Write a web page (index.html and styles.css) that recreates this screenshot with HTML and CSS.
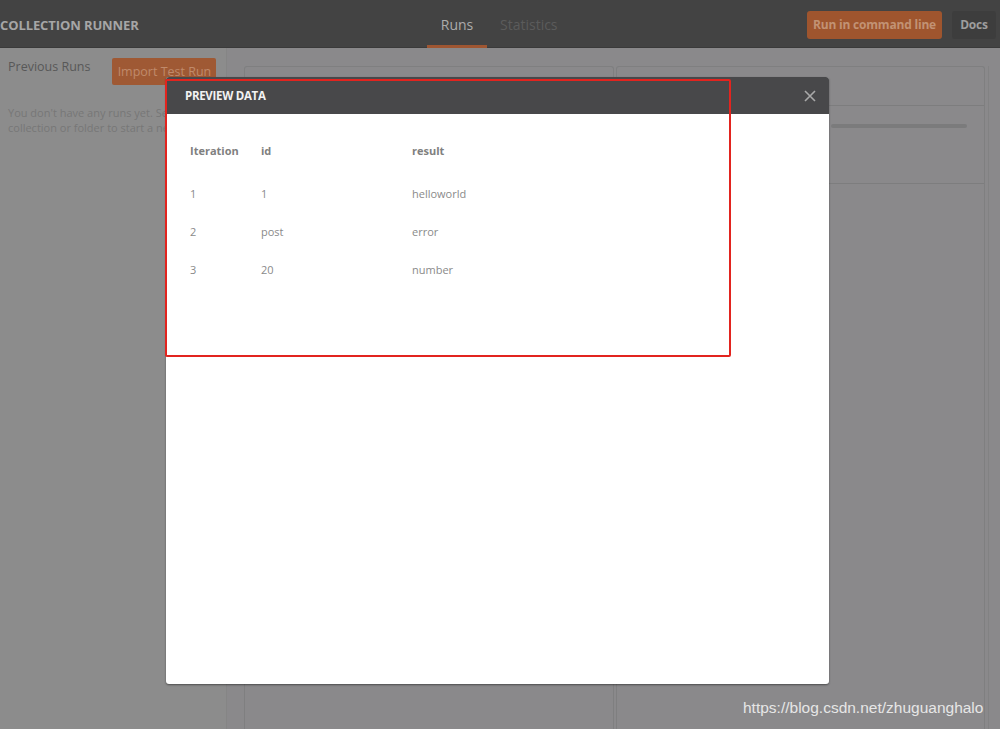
FILE: index.html
```html
<!DOCTYPE html>
<html>
<head>
<meta charset="utf-8">
<link rel="stylesheet" href="styles.css">
</head>
<body>
<div class="app">
  <header class="topbar">
    <div class="brand">COLLECTION RUNNER</div>
    <nav class="tabs">
      <div class="tab active">Runs</div>
      <div class="tab">Statistics</div>
    </nav>
    <div class="actions">
      <div class="btn btn-orange">Run in command line</div>
      <div class="btn btn-dark">Docs</div>
    </div>
  </header>
  <div class="content">
    <aside class="sidebar">
      <div class="side-head">
        <span class="side-title">Previous Runs</span>
        <span class="btn-import">Import Test Run</span>
      </div>
      <p class="side-empty">You don't have any runs yet. Select a<br>collection or folder to start a new run.</p>
    </aside>
    <main class="main">
      <section class="panel panel-mid"></section>
      <section class="panel panel-right">
        <div class="pr-head"></div>
        <div class="pr-body">
          <div class="pr-bar"></div>
          <div class="pr-text">Run a collection to see test results</div>
        </div>
      </section>
      <div class="edge"></div>
    </main>
  </div>

  <div class="modal">
    <div class="modal-head">
      <span class="modal-title">PREVIEW DATA</span>
      <svg class="close" width="12" height="12" viewBox="0 0 12 12"><path d="M1 1L11 11M11 1L1 11" stroke="#a9a9a9" stroke-width="1.6" fill="none"/></svg>
    </div>
    <div class="modal-body">
      <div class="grid">
        <div class="th">Iteration</div><div class="th">id</div><div class="th">result</div>
        <div class="td">1</div><div class="td">1</div><div class="td">helloworld</div>
        <div class="td">2</div><div class="td">post</div><div class="td">error</div>
        <div class="td">3</div><div class="td">20</div><div class="td">number</div>
      </div>
    </div>
  </div>
  <div class="annot"></div>
  <div class="watermark">https://blog.csdn.net/zhuguanghalo</div>
</div>
</body>
</html>
```

FILE: styles.css
```css
* { box-sizing: border-box; }
html, body { margin: 0; padding: 0; }
body {
  width: 1000px;
  height: 729px;
  overflow: hidden;
  font-family: "Open Sans", "Noto Sans", sans-serif;
  background: #8a898b;
}
.app { position: relative; width: 1000px; height: 729px; overflow: hidden; }

.topbar {
  height: 48px;
  background: #434343;
  display: flex;
  align-items: center;
  border-bottom: 1px solid #3a3a3a;
}
.brand {
  width: 427px;
  color: #a6a6a6;
  font-weight: 700;
  font-size: 13px;
  letter-spacing: -0.1px;
  padding-top: 2px;
}
.tabs { display: flex; height: 48px; }
.tab {
  height: 48px;
  line-height: 50px;
  font-size: 14px;
  color: #5b5b5b;
  padding: 0 13px;
}
.tab.active {
  width: 60px;
  text-align: center;
  padding: 0;
  color: #acacac;
  border-bottom: 3px solid #9f5632;
  line-height: 50px;
}
.actions { margin-left: auto; display: flex; gap: 10px; padding-right: 4px; align-items: center; padding-top: 2px; }
.btn {
  height: 28px;
  line-height: 28px;
  font-size: 12px;
  font-weight: 700;
  border-radius: 3px;
  letter-spacing: -0.2px;
}
.btn-orange { background: #9f552e; color: #c29274; width: 135px; text-align: center; }
.btn-dark { background: #3d3d3d; color: #9e9e9e; width: 44px; text-align: center; }

.content { display: flex; height: 681px; }
.sidebar {
  width: 228px;
  background: #8c8c8c;
  border-right: 1px solid #858585;
  padding: 10px 0 0 8px;
}
.side-head { display: flex; align-items: flex-start; }
.side-title { color: #585858; font-size: 12.5px; }
.btn-import {
  margin-left: 22px;
  background: #9f5934;
  color: #c08a6b;
  font-size: 12.5px;
  height: 27px;
  line-height: 28px;
  width: 104px;
  text-align: center;
  border-radius: 2px;
}
.side-empty {
  margin: 20px 0 0 0;
  color: #777777;
  font-size: 11px;
  line-height: 15px;
  white-space: nowrap;
}

.main {
  flex: 1;
  display: flex;
  padding: 18px 0 0 17px;
  gap: 2px;
}
.panel {
  border: 1px solid #7f7f80;
  border-bottom: none;
  border-radius: 3px 3px 0 0;
  background: #8a898b;
}
.panel-mid { width: 370px; }
.panel-right { width: 369px; display: flex; flex-direction: column; }
.pr-head { height: 39px; border-bottom: 1px solid #7d7d7e; }
.pr-body { height: 78px; border-bottom: 1px solid #7d7d7e; padding: 18px 17px 0 24px; }
.pr-bar { height: 4px; background: #7b7b7c; border-radius: 2px; margin-left: 190px; }
.pr-text { margin-top: 22px; font-size: 11.5px; color: #6a6a6a; white-space: nowrap; }
.edge { width: 12px; margin-left: 1px; border-left: 1px solid #828283; background: #8a898b; }

.modal {
  position: absolute;
  left: 166px;
  top: 77px;
  width: 663px;
  height: 607px;
  background: #ffffff;
  border-radius: 3px;
  box-shadow: 0 1px 2px rgba(0,0,0,0.45);
  overflow: hidden;
}
.modal-head {
  height: 37px;
  background: #48484a;
  display: flex;
  align-items: center;
  padding: 0 13px 0 19px;
}
.modal-title { color: #f2f2f2; font-weight: 700; font-size: 11.5px; letter-spacing: -0.3px; }
.close { margin-left: auto; }
.modal-body { padding: 29px 0 0 24px; }
.grid {
  display: grid;
  grid-template-columns: 71px 151px 200px;
}
.th { font-size: 11px; font-weight: 700; color: #808080; height: 43px; line-height: 16px; }
.td { font-size: 11px; color: #8a8a8a; height: 38px; line-height: 16px; }

.annot {
  position: absolute;
  left: 165px;
  top: 79px;
  width: 566px;
  height: 278px;
  border: 2px solid #e2241f;
  border-radius: 2px;
}
.watermark {
  position: absolute;
  left: 743px;
  top: 699px;
  font-family: "Liberation Sans", Arial, sans-serif;
  font-size: 15.5px;
  color: #e6e6e6;
}
```
